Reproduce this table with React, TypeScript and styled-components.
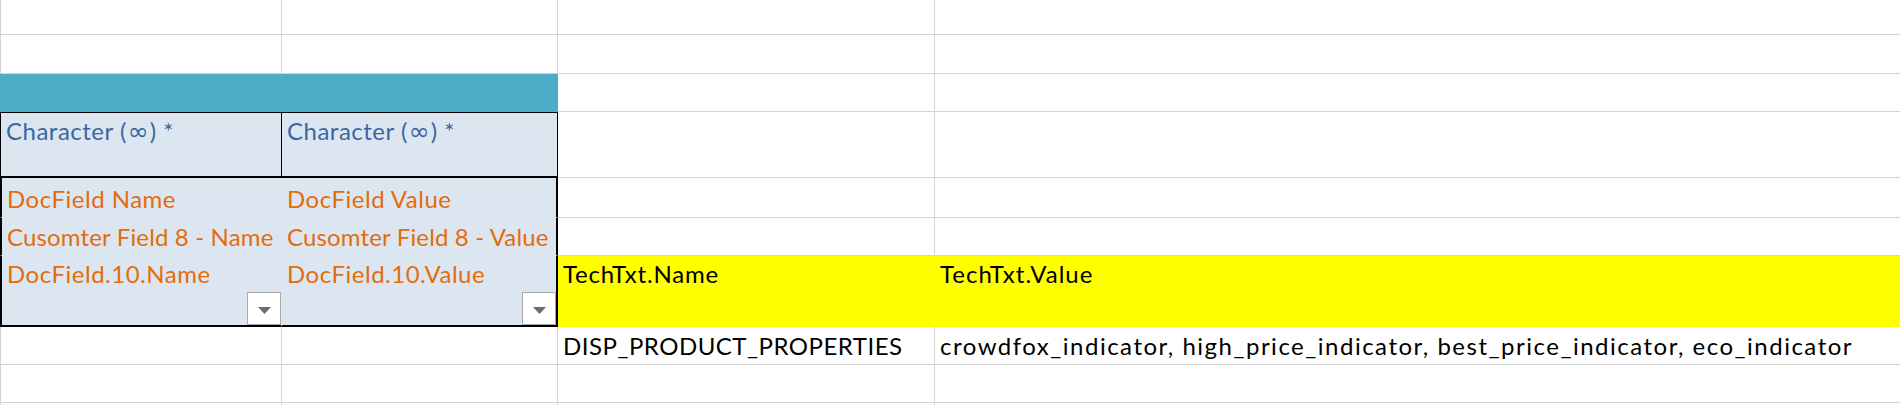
import React from "react";
import styled, { createGlobalStyle } from "styled-components";

const GlobalStyle = createGlobalStyle`
  html, body {
    margin: 0;
    padding: 0;
    background: #ffffff;
  }
  body {
    font-family: Lato, "Open Sans", sans-serif;
    overflow: hidden;
  }
`;

const GRID = "#d4d4d4";
const INK = "#000000";
const TEAL = "#4bacc6";
const PALE = "#dce6f1";
const YELLOW = "#ffff00";
const BLUE = "#3b66a2";
const ORANGE = "#e46c0a";

const Sheet = styled.div`
  width: 1900px;
  height: 405px;
  overflow: hidden;
  background: #ffffff;
`;

const Row = styled.div<{ $h: number }>`
  display: grid;
  grid-template-columns: 282px 276px 377px 1fr;
  height: ${(p) => p.$h}px;
`;

const Cell = styled.div<{
  $fill?: string;
  $color?: string;
  $top?: boolean;
  $span?: number;
  $track?: number;
  $bl?: string;
  $bt?: string;
  $br?: string;
  $bb?: string;
}>`
  position: relative;
  box-sizing: border-box;
  display: flex;
  align-items: ${(p) => (p.$top ? "flex-start" : "flex-end")};
  padding: ${(p) => (p.$top ? "4px 5px 0" : "0 5px 4px")};
  grid-column: span ${(p) => p.$span || 1};
  background: ${(p) => p.$fill || "#ffffff"};
  color: ${(p) => p.$color || INK};
  border-left: ${(p) => p.$bl || "none"};
  border-top: ${(p) => p.$bt || "none"};
  border-right: ${(p) => p.$br || `1px solid ${p.$fill || GRID}`};
  border-bottom: ${(p) => p.$bb || `1px solid ${p.$fill || GRID}`};
  font-size: 24px;
  line-height: 28px;
  letter-spacing: ${(p) => p.$track ?? 0.5}px;
  white-space: nowrap;
`;

// the infinity sign comes from a math font in the sheet, wider than Lato's
const Infinity = styled.span`
  font-family: "DejaVu Sans", sans-serif;
  font-size: 25px;
  letter-spacing: 0;
  margin: 0 1px;
`;

const FilterButton = styled.div`
  position: absolute;
  right: 0;
  bottom: 0;
  width: 34px;
  height: 33px;
  box-sizing: border-box;
  background: #ffffff;
  border: 1px solid #a9a9a9;
  display: flex;
  align-items: center;
  justify-content: center;
  padding-top: 4px;
`;

const Arrow = () => (
  <svg width="13" height="7" viewBox="0 0 13 7">
    <polygon points="0,0 13,0 6.5,7" fill="#6b6b6b" />
  </svg>
);

const thin = (c: string) => `1px solid ${c}`;
const thick = (c: string) => `2px solid ${c}`;
const gridLeft = thin(GRID);

const TypeLabel = () => (
  <span>
    Character (<Infinity>∞</Infinity>) *
  </span>
);

const App: React.FC = () => {
  return (
    <>
      <GlobalStyle />
      <Sheet>
        <Row $h={35}>
          <Cell $bl={gridLeft} />
          <Cell />
          <Cell />
          <Cell $br="none" />
        </Row>
        <Row $h={39}>
          <Cell $bl={gridLeft} />
          <Cell />
          <Cell />
          <Cell $br="none" />
        </Row>
        <Row $h={38}>
          <Cell $span={2} $fill={TEAL} />
          <Cell />
          <Cell $br="none" />
        </Row>
        <Row $h={66}>
          <Cell
            $top
            $fill={PALE}
            $color={BLUE}
            $bl={thin(INK)}
            $bt={thin(INK)}
            $br={thin(INK)}
            $bb={thick(INK)}
          >
            <TypeLabel />
          </Cell>
          <Cell $top $fill={PALE} $color={BLUE} $bt={thin(INK)} $br={thin(INK)} $bb={thick(INK)}>
            <TypeLabel />
          </Cell>
          <Cell />
          <Cell $br="none" />
        </Row>
        <Row $h={40}>
          <Cell $fill={PALE} $color={ORANGE} $bl={thick(INK)}>
            DocField Name
          </Cell>
          <Cell $fill={PALE} $color={ORANGE} $br={thick(INK)}>
            DocField Value
          </Cell>
          <Cell />
          <Cell $br="none" />
        </Row>
        <Row $h={38}>
          <Cell $fill={PALE} $color={ORANGE} $track={0.15} $bl={thick(INK)}>
            Cusomter Field 8 - Name
          </Cell>
          <Cell $fill={PALE} $color={ORANGE} $track={0.15} $br={thick(INK)}>
            Cusomter Field 8 - Value
          </Cell>
          <Cell />
          <Cell $br="none" />
        </Row>
        <Row $h={71}>
          <Cell $top $fill={PALE} $color={ORANGE} $bl={thick(INK)} $bb={thick(INK)}>
            DocField.10.Name
            <FilterButton>
              <Arrow />
            </FilterButton>
          </Cell>
          <Cell $top $fill={PALE} $color={ORANGE} $br={thick(INK)} $bb={thick(INK)}>
            DocField.10.Value
            <FilterButton>
              <Arrow />
            </FilterButton>
          </Cell>
          <Cell $top $fill={YELLOW} $track={0.8}>
            TechTxt.Name
          </Cell>
          <Cell $top $fill={YELLOW} $track={1}>
            TechTxt.Value
          </Cell>
        </Row>
        <Row $h={38}>
          <Cell $bl={gridLeft} />
          <Cell />
          <Cell>DISP_PRODUCT_PROPERTIES</Cell>
          <Cell $br="none" $track={1.5}>
            crowdfox_indicator, high_price_indicator, best_price_indicator, eco_indicator
          </Cell>
        </Row>
        <Row $h={38}>
          <Cell $bl={gridLeft} />
          <Cell />
          <Cell />
          <Cell $br="none" />
        </Row>
        <Row $h={2}>
          <Cell $bl={gridLeft} $bb="none" />
          <Cell $bb="none" />
          <Cell $bb="none" />
          <Cell $br="none" $bb="none" />
        </Row>
      </Sheet>
    </>
  );
};

export default App;
